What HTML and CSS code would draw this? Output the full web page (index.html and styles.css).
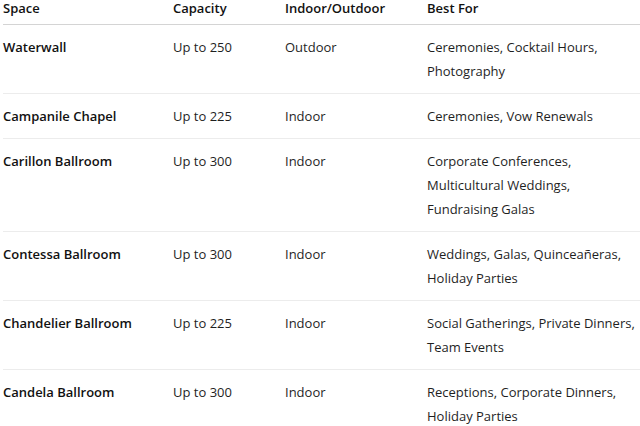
FILE: index.html
```html
<!DOCTYPE html>
<html>
<head>
<meta charset="utf-8">
<link rel="stylesheet" href="styles.css">
</head>
<body>
<table class="venues">
  <colgroup>
    <col class="c-space">
    <col class="c-cap">
    <col class="c-io">
    <col class="c-best">
  </colgroup>
  <thead>
    <tr><th>Space</th><th>Capacity</th><th>Indoor/Outdoor</th><th>Best For</th></tr>
  </thead>
  <tbody>
    <tr><td class="name">Waterwall</td><td>Up to 250</td><td>Outdoor</td><td>Ceremonies, Cocktail Hours, Photography</td></tr>
    <tr><td class="name">Campanile Chapel</td><td>Up to 225</td><td>Indoor</td><td>Ceremonies, Vow Renewals</td></tr>
    <tr><td class="name">Carillon Ballroom</td><td>Up to 300</td><td>Indoor</td><td>Corporate Conferences, Multicultural Weddings, Fundraising Galas</td></tr>
    <tr><td class="name">Contessa Ballroom</td><td>Up to 300</td><td>Indoor</td><td>Weddings, Galas, Quinceañeras, Holiday Parties</td></tr>
    <tr><td class="name">Chandelier Ballroom</td><td>Up to 225</td><td>Indoor</td><td>Social Gatherings, Private Dinners, Team Events</td></tr>
    <tr><td class="name">Candela Ballroom</td><td>Up to 300</td><td>Indoor</td><td>Receptions, Corporate Dinners, Holiday Parties</td></tr>
  </tbody>
</table>
</body>
</html>
```

FILE: styles.css
```css
html, body {
  margin: 0;
  padding: 0;
  background: #ffffff;
}
body {
  font-family: "Open Sans", "Noto Sans", "Liberation Sans", sans-serif;
  font-size: 13px;
  color: #1f1f1f;
  overflow: hidden;
}
.venues {
  border-collapse: collapse;
  table-layout: fixed;
  width: 637px;
  margin-left: 3px;
}
.c-space { width: 170px; }
.c-cap { width: 112px; }
.c-io { width: 142px; }
.c-best { width: 213px; }
.venues th {
  text-align: left;
  font-weight: 600;
  line-height: 16px;
  padding: 0 0 8px 0;
  border-bottom: 1px solid #d4d4d4;
  color: #111;
}
.venues td {
  vertical-align: top;
  line-height: 24px;
  padding: 10px 0;
  border-bottom: 1px solid #ececec;
}
.venues td.name {
  font-weight: 600;
  color: #111;
}
```
